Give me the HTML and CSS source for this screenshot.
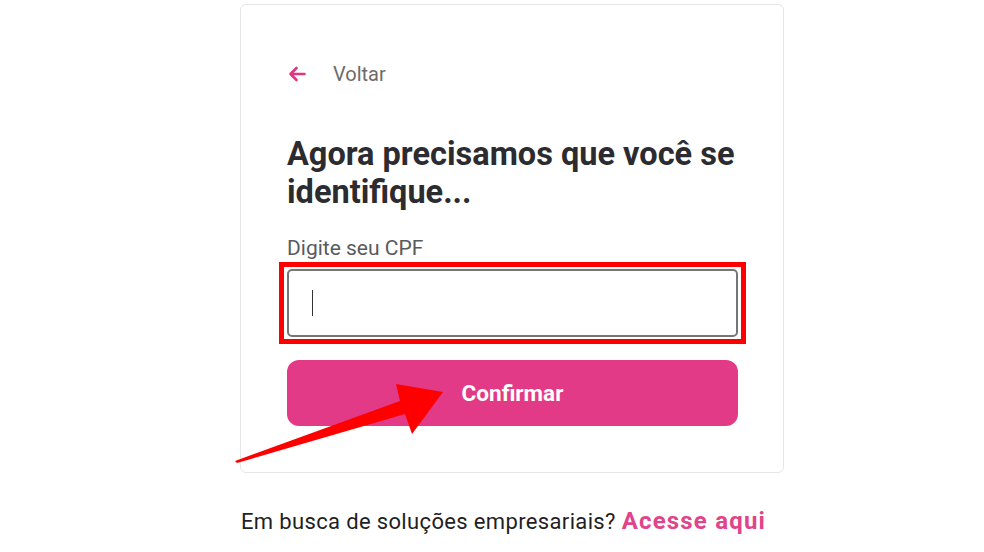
FILE: index.html
```html
<!DOCTYPE html>
<html lang="pt-BR">
<head>
<meta charset="utf-8">
<title>Identificação</title>
<link rel="stylesheet" href="styles.css">
</head>
<body>
<div class="page">
  <div class="card">
    <a class="back" href="#">
      <svg class="back-icon" width="18" height="16" viewBox="0 0 18 16" aria-hidden="true">
        <path d="M16.5 8H2.5M8.5 2L2.5 8l6 6" fill="none" stroke="#e0357f" stroke-width="2.6" stroke-linecap="round" stroke-linejoin="round"/>
      </svg>
      <span>Voltar</span>
    </a>
    <h1 class="title">Agora precisamos que você se identifique...</h1>
    <label class="label" for="cpf">Digite seu CPF</label>
    <div class="input"><span class="caret"></span></div>
    <button class="btn">Confirmar</button>
  </div>
  <p class="footer">Em busca de soluções empresariais? <a href="#" class="link">Acesse aqui</a></p>

  <div class="highlight"></div>
  <svg class="pointer" width="984" height="552" viewBox="0 0 984 552" aria-hidden="true">
    <polygon points="235,461 400,401 396,384 443,392 412,434 405,414 237,463" fill="#ff0000"/>
  </svg>
</div>
</body>
</html>
```

FILE: styles.css
```css
* { box-sizing: border-box; }
html, body { margin: 0; padding: 0; background: #ffffff; }
body { font-family: Roboto, "Noto Sans", "Liberation Sans", sans-serif; color: #2a2a2e; }

.page {
  position: relative;
  width: 984px;
  height: 552px;
  overflow: hidden;
}

.card {
  margin: 4px 0 0 240px;
  width: 544px;
  height: 469px;
  border: 1px solid #e6e6e6;
  border-radius: 6px;
  padding: 55px 45px 0 46px;
  display: flex;
  flex-direction: column;
}

.back {
  display: flex;
  align-items: center;
  gap: 27px;
  height: 28px;
  text-decoration: none;
  color: #6b6b6e;
  font-size: 20px;
}
.back-icon { flex: none; margin-left: 1px; }

.title {
  margin: 47px 0 0;
  font-size: 32.5px;
  line-height: 38px;
  font-weight: 700;
  color: #2b2b30;
  letter-spacing: 0;
}

.label {
  margin-top: 25px;
  font-size: 21px;
  line-height: 24px;
  color: #5a5a5e;
}

.input {
  margin-top: 9px;
  height: 68px;
  border: 2px solid #767676;
  border-radius: 5px;
  display: flex;
  align-items: center;
  padding-left: 23px;
}
.caret {
  width: 1px;
  height: 26px;
  background: #333;
}

.btn {
  margin-top: 23px;
  height: 66px;
  border: 0;
  border-radius: 12px;
  background: #e33a87;
  color: #ffffff;
  font-family: Roboto, "Noto Sans", "Liberation Sans", sans-serif;
  font-size: 22.5px;
  font-weight: 700;
}

.footer {
  margin: 35px 0 0 241px;
  font-size: 22px;
  line-height: 26px;
  letter-spacing: 0.35px;
  color: #1f1f24;
}
.link {
  color: #e0448a;
  font-size: 24px;
  font-weight: 700;
  letter-spacing: 1.2px;
  text-decoration: none;
}

.highlight {
  position: absolute;
  left: 279px;
  top: 262px;
  width: 467px;
  height: 82px;
  border: 5px solid #ff0000;
}
.pointer {
  position: absolute;
  left: 0;
  top: 0;
}
```
